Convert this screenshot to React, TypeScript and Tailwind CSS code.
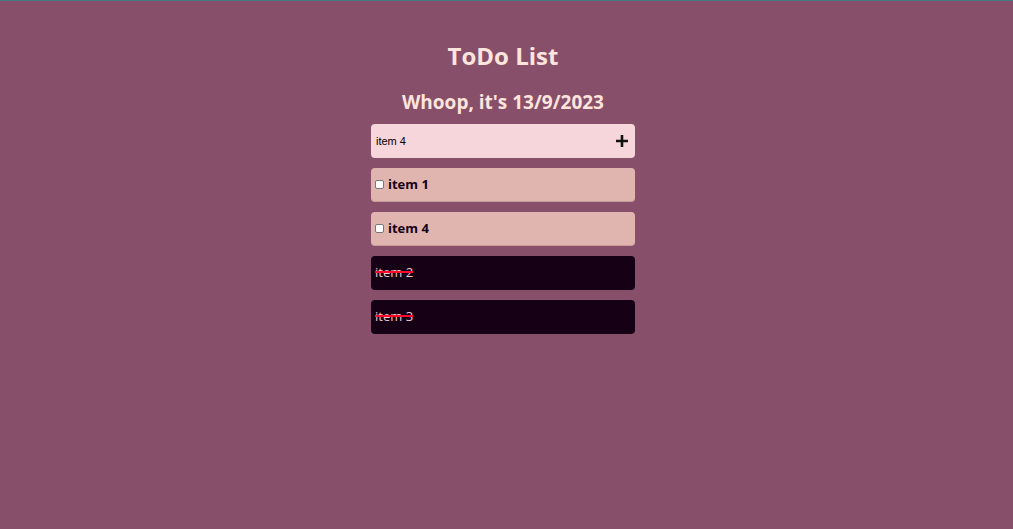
import React from 'react';

const done = ['item 2', 'item 3'];
const todo = ['item 1', 'item 4'];

export default function App() {
  return (
    <div className="min-h-[529px] bg-[#884f6b] border-t border-[#3e7b7c] pr-[7px]" style={{ fontFamily: '"Open Sans", "Noto Sans", sans-serif' }}>
      <div className="w-[264px] mx-auto flex flex-col items-stretch">
        <h1 className="mt-[39px] text-center text-[24px] leading-[32px] font-bold text-[#fde4dc]">ToDo List</h1>
        <h2 className="mt-[18px] text-center text-[19px] leading-[24px] font-bold text-[#fde4dc]">Whoop, it's 13/9/2023</h2>
        <div className="mt-[10px] h-[34px] rounded-[4px] bg-[#f6d6db] flex items-center justify-between pl-[5px] pr-[6px]">
          <span className="text-[11px] text-black" style={{ fontFamily: '"Liberation Sans", Arial, sans-serif' }}>item 4</span>
          <svg width="14" height="14" viewBox="0 0 14 14" className="text-[#111]">
            <path d="M7 1v12M1 7h12" stroke="currentColor" strokeWidth="2.6" />
          </svg>
        </div>
        <div className="mt-[10px] flex flex-col gap-[10px]">
          {todo.map((t) => (
            <div key={t} className="h-[34px] rounded-[4px] bg-[#e0b5b0] border-b border-[#c79a9c] flex items-center pl-[4px]">
              <span className="w-[9px] h-[9px] rounded-[2px] bg-white border border-[#777]" />
              <span className="ml-[4px] text-[13px] font-bold text-[#160016]">{t}</span>
            </div>
          ))}
          {done.map((t) => (
            <div key={t} className="h-[34px] rounded-[4px] bg-[#160016] flex items-center pl-[4px]">
              <span className="text-[13px] text-[#f0c8d0] line-through decoration-[#ff0a2a] decoration-[1.5px]">{t}</span>
            </div>
          ))}
        </div>
      </div>
    </div>
  );
}
